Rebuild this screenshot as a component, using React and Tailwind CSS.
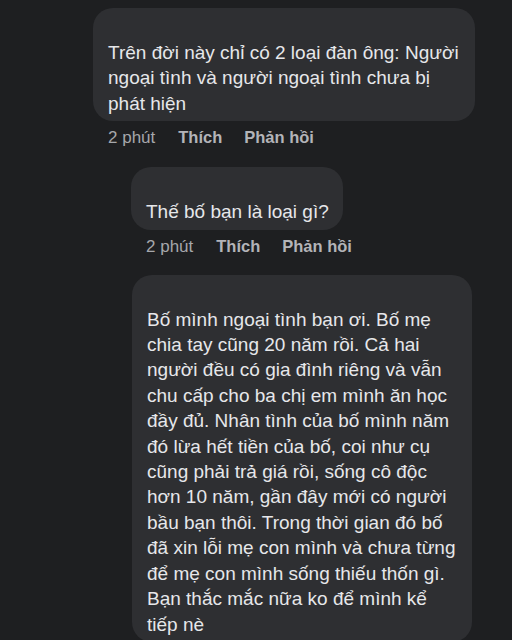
const comments = [
    {
        lines: ['Trên đời này chỉ có 2 loại đàn ông: Người', 'ngoại tình và người ngoại tình chưa bị', 'phát hiện'],
        box: 'ml-[93px] w-[382px] mt-[8px]',
    },
    {
        lines: ['Thế bố bạn là loại gì?'],
        box: 'ml-[131px] w-[212px] mt-[17px]',
    },
    {
        lines: [
            'Bố mình ngoại tình bạn ơi. Bố mẹ',
            'chia tay cũng 20 năm rồi. Cả hai',
            'người đều có gia đình riêng và vẫn',
            'chu cấp cho ba chị em mình ăn học',
            'đầy đủ. Nhân tình của bố mình năm',
            'đó lừa hết tiền của bố, coi như cụ',
            'cũng phải trả giá rồi, sống cô độc',
            'hơn 10 năm, gần đây mới có người',
            'bầu bạn thôi. Trong thời gian đó bố',
            'đã xin lỗi mẹ con mình và chưa từng',
            'để mẹ con mình sống thiếu thốn gì.',
            'Bạn thắc mắc nữa ko để mình kể',
            'tiếp nè',
        ],
        box: 'ml-[132px] w-[340px] mt-[16px]',
        noMeta: true,
    },
];

function Comment({ lines, box, noMeta }) {
    return (
        <div className={box}>
            <div className="bg-[#2e2f32] rounded-[20px] pl-[15px] pr-3 pt-[32px] pb-[5px] text-[19px] leading-[25.4px] text-[#e6e7ea]">
                {lines.map((l, i) => (
                    <div key={i} className="whitespace-nowrap">{l}</div>
                ))}
            </div>
            {!noMeta && (
                <div className="flex items-baseline whitespace-nowrap pl-[15px] mt-[4px] text-[17px] leading-[24px] text-[#a6a7ab]">
                    <span>2 phút</span>
                    <span className="ml-[23px] font-semibold text-[16.5px] text-[#b3b4b8]">Thích</span>
                    <span className="ml-[22px] font-semibold text-[16.5px] text-[#b3b4b8]">Phản hồi</span>
                </div>
            )}
        </div>
    );
}

export default function App() {
    return (
        <div className="w-[512px] h-[640px] overflow-hidden bg-[#1e1f21] font-['Liberation_Sans',Arial,sans-serif]">
            {comments.map((c, i) => (
                <Comment key={i} {...c} />
            ))}
        </div>
    );
}
